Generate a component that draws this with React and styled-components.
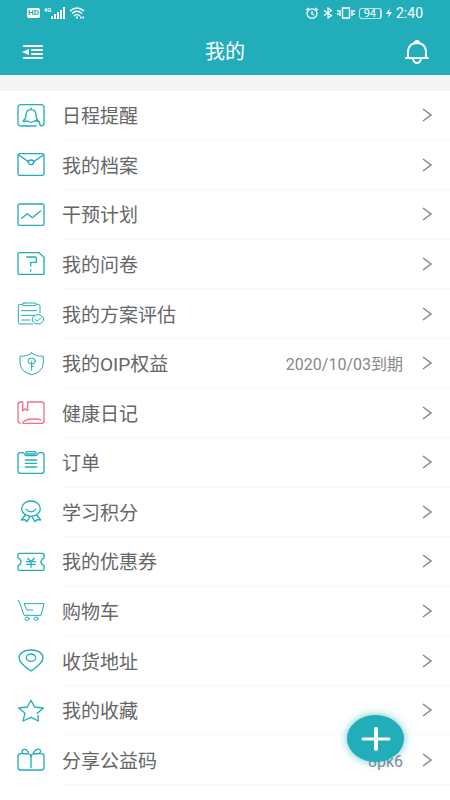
import React from "react";
import styled, { createGlobalStyle } from "styled-components";

const TEAL = "#22adbb";
const PINK = "#f0718c";

const GlobalStyle = createGlobalStyle`
  * {
    box-sizing: border-box;
  }

  body {
    margin: 0;
    background: #ffffff;
    font-family: Roboto, "Noto Sans CJK SC", sans-serif;
  }
`;

const icons = {
  schedule: (
    <>
      <path d="M60 69H16Q6 69 6 60V14Q6 5 16 5H74Q84 5 84 14V58Q84 69 77 69Q71 69 71 61Q71 54 64 54" />
      <path d="M45 15V20M22 53Q30 48 30 36Q30 20 45 20Q60 20 60 36Q60 48 66 54M22 53Q20 56 25 56Q32 52 37 55Q45 61 53 55Q58 52 64 54" />
    </>
  ),
  archive: (
    <>
      <rect x="6" y="5" width="78" height="65" rx="5" />
      <path d="M8 9L37 29M82 9L53 29" />
      <ellipse cx="45" cy="31" rx="8" ry="7" />
    </>
  ),
  plan: (
    <>
      <rect x="6" y="6" width="78" height="64" rx="5" />
      <path d="M17 49L34 35L49 47L74 27" />
    </>
  ),
  survey: (
    <>
      <path d="M10 5H69L84 19V70H10Q6 70 6 66V9Q6 5 10 5Z" />
      <path d="M32 18H58Q61 18 61 21V34H44V45M44 57V60" />
    </>
  ),
  evaluation: (
    <>
      <path d="M20 10H12Q7 10 7 15V64Q7 69 12 69H50M61 10H67Q72 10 72 15V35" />
      <rect x="20" y="6" width="41" height="8" rx="4" />
      <path d="M17 29H62M17 43H54M17 57H42" />
      <ellipse cx="66" cy="55" rx="17" ry="14" />
      <path d="M57 55L64 61L75 50" />
    </>
  ),
  rights: (
    <>
      <path d="M47 6Q58 16 82 16V36Q80 64 47 71Q14 64 12 36V16Q36 16 47 6Z" />
      <ellipse cx="47" cy="30" rx="11" ry="9" />
      <path d="M47 30V58M47 46H52" />
    </>
  ),
  diary: (
    <>
      <path d="M13 70Q6 68 6 62V14Q6 6 14 6H20V32L27 26L35 32V6H76Q84 6 84 14V62Q84 70 76 70H22" />
      <path d="M22 70Q18 68 25 63Q34 57 48 57H60Q70 57 74 60" />
    </>
  ),
  order: (
    <>
      <path d="M6 16Q6 8 13 8H20Q24 8 25 12Q27 17 32 17H58Q63 17 65 12Q66 8 70 8H77Q84 8 84 16V62Q84 70 76 70H14Q6 70 6 62Z" />
      <rect x="30" y="5" width="30" height="7" rx="3" />
      <path d="M28 30H62M28 40H62M28 51H62" />
    </>
  ),
  points: (
    <>
      <ellipse cx="45" cy="29" rx="28" ry="23" />
      <path d="M31 31Q45 46 59 31" />
      <path d="M28 48L16 63L27 62L33 68L42 53M62 48L74 63L63 62L57 68L48 53" />
    </>
  ),
  coupon: (
    <>
      <path d="M10 13H80Q84 13 84 17V27Q75 31 75 38Q75 46 84 50V60Q84 64 80 64H10Q6 64 6 60V50Q15 46 15 38Q15 31 6 27V17Q6 13 10 13Z" />
      <path d="M35 28L45 38L55 28M32 38H58M32 46H58M45 38V55" />
    </>
  ),
  cart: (
    <>
      <path d="M6 8H9L24 52H75L84 17H24L33 36H50" />
      <ellipse cx="33" cy="62" rx="6" ry="5" />
      <ellipse cx="60" cy="62" rx="6" ry="5" />
    </>
  ),
  address: (
    <>
      <path d="M45 69C27 57 9 44 9 29C9 15 25 6 45 6S81 15 81 29C81 44 63 57 45 69Z" />
      <ellipse cx="45" cy="29" rx="14" ry="11" />
    </>
  ),
  favorite: (
    <path d="M66 52L67 69L45 58L21 69L27 46L8 30L34 27L45 7L56 27L82 30L64 46" />
  ),
  share: (
    <>
      <path d="M33 20H14Q6 20 6 28V60Q6 69 14 69H76Q84 69 84 60V28Q84 20 76 20H57M45 62V29" />
      <path d="M45 29Q44 20 33 20H24Q18 20 18 14Q19 6 27 7Q34 8 37 16M45 29Q46 20 57 20H65Q73 19 74 12Q72 5 63 7Q54 10 51 20" />
    </>
  ),
};

const menuItems = [
  { icon: "schedule", label: "日程提醒" },
  { icon: "archive", label: "我的档案" },
  { icon: "plan", label: "干预计划" },
  { icon: "survey", label: "我的问卷" },
  { icon: "evaluation", label: "我的方案评估", thin: true },
  { icon: "rights", label: "我的OIP权益", value: "2020/10/03到期", thin: true },
  { icon: "diary", label: "健康日记", color: PINK },
  { icon: "order", label: "订单" },
  { icon: "points", label: "学习积分" },
  { icon: "coupon", label: "我的优惠券" },
  { icon: "cart", label: "购物车", thin: true },
  { icon: "address", label: "收货地址" },
  { icon: "favorite", label: "我的收藏" },
  { icon: "share", label: "分享公益码", value: "8pk6" },
];

const StatusBar = () => (
  <Status>
    <StatusGroup>
      <HdBadge>HD</HdBadge>
      <Signal>
        <Network>4G</Network>
        <svg width="14" height="12" viewBox="0 0 14 12" fill="#fff" aria-hidden="true">
          <path d="M0 9h2v3H0zM3 7h2v5H3zM6 5h2v7H6zM9 3h2v9H9zM12 0h2v12h-2z" />
        </svg>
      </Signal>
      <svg width="16" height="12" viewBox="0 0 16 12" fill="none" stroke="#fff" strokeWidth="1.4" aria-hidden="true">
        <path d="M1 4Q8 -2 15 4M3 6.5Q8 2 13 6.5M5 9Q8 6 11 9" />
        <path d="M7 10.5h2M11 10.5h1.5M13.5 10.5h1.5" strokeWidth="2" />
      </svg>
    </StatusGroup>
    <StatusGroup>
      <svg width="14" height="12" viewBox="0 0 14 12" fill="none" stroke="#fff" strokeWidth="1.3" aria-hidden="true">
        <ellipse cx="7" cy="6.5" rx="5" ry="4.6" />
        <path d="M1 3L4 1M13 3L10 1M7 4V7L9 8" />
      </svg>
      <svg width="10" height="12" viewBox="0 0 10 12" fill="none" stroke="#fff" strokeWidth="1.2" aria-hidden="true">
        <path d="M1 3.5L8.5 8.5L5 11V1L8.5 3.5L1 8.5" />
      </svg>
      <svg width="18" height="12" viewBox="0 0 18 12" fill="none" stroke="#fff" strokeWidth="1.4" aria-hidden="true">
        <path d="M5.5 1H12.5V11H5.5ZM3 3V9M15 3V9M1 3V5M1 6V8M17 3V5M17 6V8" />
      </svg>
      <Battery>94</Battery>
      <svg width="6" height="10" viewBox="0 0 6 10" fill="#fff" aria-hidden="true">
        <path d="M4 0L0 6H3L2 10L6 4H3Z" />
      </svg>
      <Clock>2:40</Clock>
    </StatusGroup>
  </Status>
);

const MenuRow = ({ item }) => (
  <li>
    <RowLink href="#">
      <RowIcon viewBox="0 0 90 78" $color={item.color} $thin={item.thin} aria-hidden="true">
        {icons[item.icon]}
      </RowIcon>
      <RowBody>
        <Label>{item.label}</Label>
        {item.value && <Value>{item.value}</Value>}
        <Chevron viewBox="0 0 10 14" aria-hidden="true">
          <path d="M1 1L9 7L1 13" />
        </Chevron>
      </RowBody>
    </RowLink>
  </li>
);

const App = () => {
  return (
    <>
      <GlobalStyle />
      <Header>
        <StatusBar />
        <NavBar>
          <IconButton type="button" aria-label="菜单">
            <svg width="22" height="16" viewBox="0 0 22 16" aria-hidden="true">
              <path d="M2 2H20M10 6H20M10 10H20M2 14H20" stroke="#fff" strokeWidth="2" strokeLinecap="round" />
              <path d="M0 8L7 5V11Z" fill="#fff" />
            </svg>
          </IconButton>
          <Title>我的</Title>
          <IconButton type="button" aria-label="通知">
            <svg width="24" height="24" viewBox="0 0 24 24" fill="none" stroke="#fff" strokeWidth="2" strokeLinecap="round" aria-hidden="true">
              <path d="M1 18H23M3 18V11Q4 3 12 3Q20 3 21 11V18M10 2Q12 0 14 2M8 19Q9 23 12 23Q15 23 16 19" />
            </svg>
          </IconButton>
        </NavBar>
      </Header>
      <Menu>
        {menuItems.map((item) => (
          <MenuRow key={item.icon} item={item} />
        ))}
      </Menu>
      <AddButton type="button" aria-label="添加">
        <svg width="30" height="26" viewBox="0 0 30 26" stroke="#fff" strokeLinecap="round" aria-hidden="true">
          <path d="M2 13H28" strokeWidth="3" />
          <path d="M15 3V23" strokeWidth="4" />
        </svg>
      </AddButton>
    </>
  );
};

const Header = styled.header`
  background: ${TEAL};
  color: #ffffff;
`;

const Status = styled.div`
  display: flex;
  justify-content: space-between;
  align-items: center;
  height: 26px;
  padding: 0 27px;
`;

const StatusGroup = styled.div`
  display: flex;
  align-items: center;
  gap: 4px;
`;

const HdBadge = styled.span`
  padding: 0 1px;
  border-radius: 2px;
  background: #ffffff;
  color: ${TEAL};
  font-size: 8px;
  font-weight: 700;
  line-height: 10px;
`;

const Signal = styled.span`
  display: flex;
  align-items: flex-start;
`;

const Network = styled.span`
  font-size: 6px;
  font-weight: 700;
  line-height: 6px;
`;

const Battery = styled.span`
  padding: 0 4px;
  border: 1px solid rgba(255, 255, 255, 0.7);
  border-right-width: 2px;
  border-radius: 3px;
  font-size: 11px;
  line-height: 9px;
`;

const Clock = styled.span`
  font-size: 14px;
  line-height: 16px;
`;

const NavBar = styled.div`
  display: flex;
  justify-content: space-between;
  align-items: center;
  height: 49px;
  padding: 2px 20px 0;
`;

const IconButton = styled.button`
  display: flex;
  justify-content: center;
  align-items: center;
  width: 26px;
  height: 32px;
  padding: 0;
  border: 0;
  background: none;
  cursor: pointer;
`;

const Title = styled.h1`
  margin: 0;
  font-size: 20px;
  font-weight: 400;
  line-height: 24px;
`;

const Menu = styled.ul`
  display: grid;
  grid-auto-rows: 1fr;
  min-height: 710px;
  margin: 0;
  padding: 0;
  border-top: 16px solid #f5f5f5;
  list-style: none;
`;

const RowLink = styled.a`
  display: flex;
  align-items: center;
  gap: 16px;
  height: 100%;
  padding-left: 16px;
  color: #666666;
  text-decoration: none;
`;

const RowIcon = styled.svg`
  flex: none;
  width: 30px;
  height: 26px;
  fill: none;
  stroke: ${(props) => props.$color || TEAL};
  stroke-width: ${(props) => (props.$thin ? 3 : 4)};
  stroke-linecap: round;
  stroke-linejoin: round;
`;

const RowBody = styled.div`
  flex: 1;
  display: flex;
  align-items: center;
  height: 100%;
  padding-right: 18px;
  border-bottom: 1px solid #f7f7f7;
`;

const Label = styled.span`
  flex: 1;
  padding-top: 4px;
  font-size: 19px;
  line-height: 24px;
`;

const Value = styled.span`
  padding-top: 4px;
  color: #888888;
  font-size: 16px;
  line-height: 20px;
`;

const Chevron = styled.svg`
  width: 10px;
  height: 14px;
  margin-left: 19px;
  fill: none;
  stroke: #888888;
  stroke-width: 1.5;
`;

const AddButton = styled.button`
  position: fixed;
  right: 46px;
  bottom: 38px;
  display: flex;
  justify-content: center;
  align-items: center;
  width: 57px;
  height: 47px;
  padding: 0;
  border: 0;
  border-radius: 50%;
  background: ${TEAL};
  box-shadow: 0 0 8px rgba(34, 173, 187, 0.7);
  cursor: pointer;
`;

export default App;
